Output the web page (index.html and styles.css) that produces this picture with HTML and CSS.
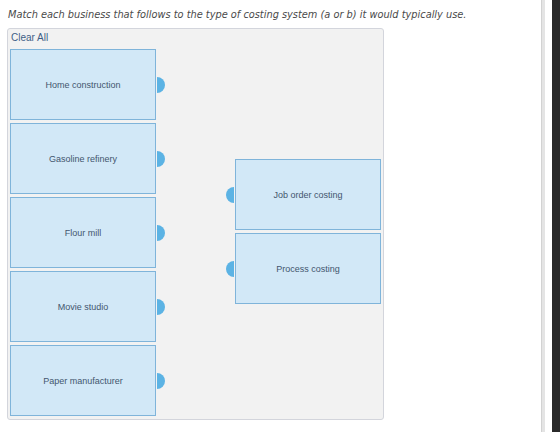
FILE: index.html
```html
<!DOCTYPE html>
<html lang="en">
  <head>
    <meta charset="UTF-8" />
    <title>Costing Systems Matching</title>
    <link rel="stylesheet" href="styles.css">
  </head>
  <body>
    <div class="page">
      <div class="content">
        <p class="prompt">
          Match each business that follows to the type of costing system (a or b) it would typically use.
        </p>

        <div class="match-box">
          <a class="clear-all">Clear All</a>

          <div class="board">
            <div class="column">
              <div class="card">Home construction<span class="socket right"></span></div>
              <div class="card">Gasoline refinery<span class="socket right"></span></div>
              <div class="card">Flour mill<span class="socket right"></span></div>
              <div class="card">Movie studio<span class="socket right"></span></div>
              <div class="card">Paper manufacturer<span class="socket right"></span></div>
            </div>

            <div class="column targets">
              <div class="card"><span class="socket left"></span>Job order costing</div>
              <div class="card"><span class="socket left"></span>Process costing</div>
            </div>
          </div>
        </div>
      </div>

      <div class="scroll-track"></div>
      <div class="frame-edge"></div>
    </div>
  </body>
</html>
```

FILE: styles.css
```css
* {
  margin: 0;
  padding: 0;
  box-sizing: border-box;
}

body {
  background: #ffffff;
  font-family: "Liberation Sans", Arial, sans-serif;
}

.page {
  display: flex;
  height: 432px;
  width: 560px;
  overflow: hidden;
}

.content {
  width: 541px;
  padding: 8px 0 0 7px;
}

.prompt {
  font-family: "DejaVu Sans", Verdana, sans-serif;
  font-style: italic;
  font-size: 9.8px;
  line-height: 13px;
  color: #4a4a4a;
  padding-left: 1px;
  margin-bottom: 7px;
}

.match-box {
  width: 377px;
  height: 392px;
  background: #f2f2f2;
  border: 1px solid #d3d5dc;
  border-radius: 3px;
  padding: 2px 2px 0 2px;
}

.clear-all {
  display: block;
  font-size: 10px;
  line-height: 13px;
  color: #3f5f86;
  margin-left: 1px;
  margin-bottom: 5px;
}

.board {
  display: grid;
  grid-template-columns: 146px 146px;
  column-gap: 79px;
}

.column {
  display: flex;
  flex-direction: column;
  gap: 3px;
}

.targets {
  padding-top: 110px;
}

.card {
  position: relative;
  height: 71px;
  background: #d2e8f7;
  border: 1px solid #7fb4da;
  display: flex;
  align-items: center;
  justify-content: center;
  font-size: 9px;
  color: #43566e;
}

.socket {
  position: absolute;
  top: 50%;
  width: 8px;
  height: 16px;
  margin-top: -8px;
  background: #5cb3e4;
}

.socket.right {
  right: -10px;
  border-radius: 0 8px 8px 0;
}

.socket.left {
  left: -10px;
  border-radius: 8px 0 0 8px;
}

.scroll-track {
  width: 4px;
  background: #e4e4e4;
  border-left: 1px solid #d2d2d2;
}

.frame-edge {
  flex: 1;
  background: #ffffff;
  border-right: 8px solid #2a2a2a;
}
```
